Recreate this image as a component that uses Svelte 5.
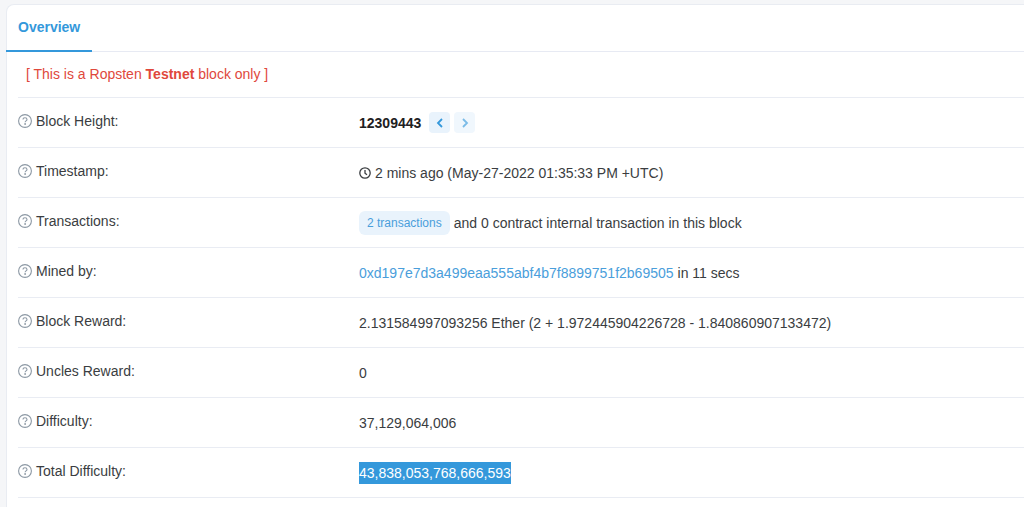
<script>
  let block = {
    height: "12309443",
    age: "2 mins ago (May-27-2022 01:35:33 PM +UTC)",
    transactions: "2 transactions",
    internal: "and 0 contract internal transaction in this block",
    miner: "0xd197e7d3a499eaa555abf4b7f8899751f2b69505",
    minedIn: "in 11 secs",
    reward: "2.131584997093256 Ether (2 + 1.972445904226728 - 1.840860907133472)",
    unclesReward: "0",
    difficulty: "37,129,064,006",
    totalDifficulty: "43,838,053,768,666,593",
  };
</script>

{#snippet label(text)}
  <dt>
    <svg class="help" viewBox="0 0 14 14" aria-hidden="true">
      <circle cx="7" cy="7" r="6.4" />
      <path d="M5 5.6C5 4.3 5.9 3.7 7 3.7s2 .7 2 1.8c0 1.3-1.9 1.4-1.9 2.7" />
      <circle class="dot" cx="7.1" cy="10" r="0.9" />
    </svg>
    {text}:
  </dt>
{/snippet}

<main>
  <nav>
    <a class="tab" href="#overview">Overview</a>
  </nav>

  <section id="overview">
    <p class="notice">[ This is a Ropsten <strong>Testnet</strong> block only ]</p>

    <dl>
      <div class="row">
        {@render label("Block Height")}
        <dd>
          <strong>{block.height}</strong>
          <span class="pager">
            <button aria-label="Previous block">
              <svg viewBox="0 0 8 10"><path d="M6 1L2 5l4 4" /></svg>
            </button>
            <button aria-label="Next block" disabled>
              <svg viewBox="0 0 8 10"><path d="M2 1l4 4-4 4" /></svg>
            </button>
          </span>
        </dd>
      </div>
      <div class="row">
        {@render label("Timestamp")}
        <dd>
          <svg class="clock" viewBox="0 0 12 12" aria-hidden="true">
            <circle cx="6" cy="6" r="5.2" />
            <path d="M6 3v3.2l2 1.5" />
          </svg>
          <span>{block.age}</span>
        </dd>
      </div>
      <div class="row">
        {@render label("Transactions")}
        <dd>
          <a class="badge" href="#transactions">{block.transactions}</a>
          <span>{block.internal}</span>
        </dd>
      </div>
      <div class="row">
        {@render label("Mined by")}
        <dd>
          <a href="#miner">{block.miner}</a>
          <span>{block.minedIn}</span>
        </dd>
      </div>
      <div class="row">
        {@render label("Block Reward")}
        <dd>{block.reward}</dd>
      </div>
      <div class="row">
        {@render label("Uncles Reward")}
        <dd>{block.unclesReward}</dd>
      </div>
      <div class="row">
        {@render label("Difficulty")}
        <dd>{block.difficulty}</dd>
      </div>
      <div class="row">
        {@render label("Total Difficulty")}
        <dd><mark>{block.totalDifficulty}</mark></dd>
      </div>
    </dl>
  </section>
</main>

<style>
  :global(body) {
    background-color: #f5f6f8;
    color: #3a3d41;
    font-family: "Liberation Sans", Arial, sans-serif;
    font-size: 14px;
    line-height: 22px;
  }

  main {
    box-sizing: border-box;
    min-height: calc(100vh - 4px);
    margin: 4px 0 0 6px;
    border: 1px solid #e9ecf2;
    border-right: none;
    border-bottom: none;
    border-radius: 8px 0 0 0;
    background-color: white;
  }

  nav {
    display: flex;
    border-bottom: 1px solid #e7eaf3;
  }

  a {
    color: #4a9edb;
    text-decoration: none;
  }

  .tab {
    margin: 0 0 -1px -1px;
    padding: 11px 12px 12px;
    border-bottom: 2px solid #3498db;
    color: #3498db;
    font-weight: bold;
  }

  section {
    padding-left: 11px;
  }

  .notice {
    margin: 0;
    padding: 11px 8px 12px;
    border-bottom: 1px solid #e9ecf3;
    color: #e0483c;
  }

  dl {
    margin: 0;
  }

  .row {
    display: grid;
    grid-template-columns: 341px 1fr;
    min-height: 49px;
    border-bottom: 1px solid #e9ecf3;
  }

  dt,
  dd {
    display: flex;
    align-items: center;
    gap: 4px;
    margin: 0;
  }

  dt {
    padding-bottom: 4px;
  }

  svg {
    fill: none;
    stroke: currentColor;
  }

  .help {
    width: 14px;
    height: 14px;
    color: #8c98a4;
    stroke-width: 1.1;
  }

  .dot {
    fill: currentColor;
    stroke: none;
  }

  .clock {
    width: 12px;
    height: 12px;
    stroke-width: 1.3;
  }

  strong {
    color: #1e2022;
  }

  .notice strong {
    color: inherit;
  }

  .pager {
    display: flex;
    gap: 4px;
    margin-left: 4px;
  }

  button {
    display: flex;
    align-items: center;
    justify-content: center;
    width: 21px;
    height: 21px;
    padding: 0;
    border: none;
    border-radius: 4px;
    background-color: #e9f3fc;
    color: #3498db;
  }

  button:disabled {
    opacity: 0.65;
  }

  button svg {
    width: 8px;
    height: 10px;
    stroke-width: 1.8;
  }

  .badge {
    padding: 1px 8px;
    border-radius: 6px;
    background-color: #e9f3fc;
    font-size: 12px;
  }

  mark {
    background-color: #3498db;
    color: white;
  }
</style>
